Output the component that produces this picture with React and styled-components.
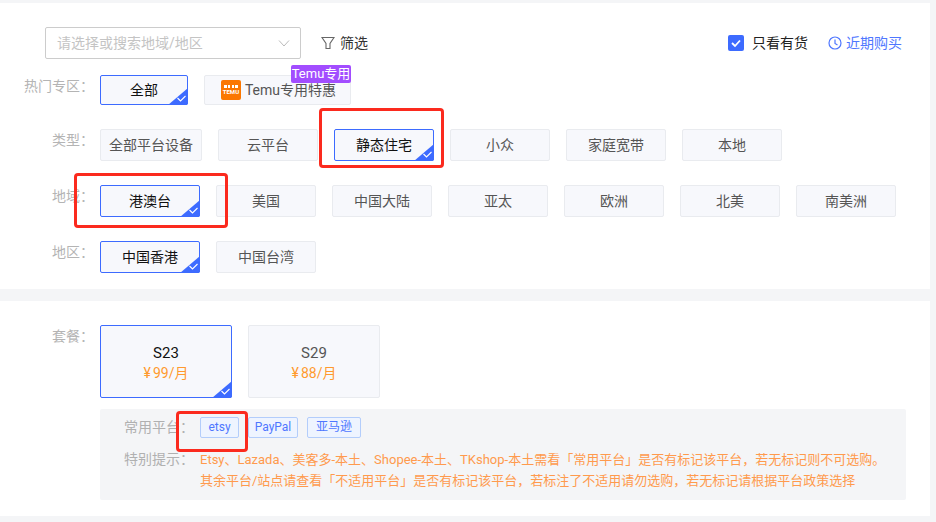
import React from "react"
import styled, { createGlobalStyle } from "styled-components"

const GlobalStyle = createGlobalStyle`
  html, body {
    margin: 0;
    height: 522px;
    overflow: hidden;
    background: #f4f5f7;
  }
  * {
    box-sizing: border-box;
  }
`

const Page = styled.div`
  position: relative;
  width: 930px;
  padding-top: 3px;
  font-family: Roboto, "Noto Sans CJK SC", sans-serif;
  font-size: 14px;
  color: #555;
`

const Card = styled.section`
  background: #fff;
  padding: ${({ $pad }) => $pad};
  margin-bottom: 12px;
`

const Toolbar = styled.div`
  display: flex;
  align-items: center;
  height: 32px;
  padding: 0 28px 0 45px;
  margin-bottom: 16px;
`

const ToolText = styled.span`
  margin-bottom: 2px;
`

const Select = styled.div`
  width: 256px;
  height: 32px;
  border: 1px solid #ccc;
  border-radius: 2px;
  display: flex;
  align-items: center;
  justify-content: space-between;
  padding: 0 10px 0 11px;
  color: #c4c4c4;
`

const FilterBtn = styled.div`
  display: flex;
  align-items: center;
  gap: 5px;
  margin-left: 20px;
  color: #333;
`

const Right = styled.div`
  margin-left: auto;
  display: flex;
  align-items: center;
`

const Check = styled.span`
  width: 16px;
  height: 16px;
  border-radius: 2px;
  background: #3d6bff;
  display: flex;
  align-items: center;
  justify-content: center;
  margin-right: 8px;
`

const InStock = styled(ToolText)`
  color: #222;
  margin-right: 20px;
`

const Recent = styled.span`
  display: flex;
  align-items: center;
  gap: 4px;
  color: #4f77ff;
`

const Row = styled.div`
  display: flex;
  margin-bottom: ${({ $mb }) => $mb ?? 24}px;
`

const Label = styled.div`
  width: 100px;
  flex: none;
  padding-right: 6px;
  text-align: right;
  line-height: 22px;
  color: #b4b4b4;
`

const Options = styled.div`
  display: flex;
  gap: 16px;
`

const Option = styled.div`
  position: relative;
  width: ${({ $w }) => $w ?? 100}px;
  height: ${({ $h }) => $h ?? 32}px;
  padding-bottom: 2px;
  display: flex;
  align-items: center;
  justify-content: center;
  gap: 4px;
  background: #f7f8fc;
  border: 1px solid ${({ $on }) => ($on ? "#3d6bff" : "#e9ebef")};
  border-radius: 2px;
  color: ${({ $on }) => ($on ? "#111" : "#555")};
`

const Corner = styled.svg`
  position: absolute;
  right: -1px;
  bottom: -1px;
`

const Badge = styled.span`
  position: absolute;
  top: -11px;
  right: -1px;
  width: 60px;
  height: 18px;
  background: #a24dff;
  border-radius: 2px;
  color: #fff;
  font-size: 13px;
  line-height: 18px;
  text-align: center;
`

const TemuLogo = styled.span`
  width: 20px;
  height: 20px;
  margin: 0 0 -2px 2px;
  border-radius: 2px;
  background: #fb7701;
  color: #fff;
  font-size: 6px;
  font-weight: 700;
  line-height: 6px;
  display: flex;
  flex-direction: column;
  align-items: center;
  justify-content: center;
  gap: 1px;
`

const Plan = styled(Option)`
  flex-direction: column;
  gap: 0;
  padding: 3px 0 0;
  line-height: 20px;
`

const PlanName = styled.div`
  font-size: 15px;
`

const Price = styled.div`
  color: #ff9a2e;
  word-spacing: -1.5px;
`

const InfoBox = styled.div`
  width: 806px;
  height: 91px;
  margin-left: 100px;
  background: #f4f5f7;
  border-radius: 2px;
  padding: 8px 0 0 24px;
`

const InfoRow = styled.div`
  display: flex;
  margin-bottom: ${({ $mb }) => $mb ?? 0}px;
`

const InfoLabel = styled.div`
  width: 76px;
  flex: none;
  line-height: 21px;
  color: #b0b0b0;
`

const Tags = styled.div`
  display: flex;
  gap: 9px;
`

const Tag = styled.span`
  width: ${({ $w }) => $w}px;
  height: 21px;
  border: 1px solid #b3cdfb;
  border-radius: 2px;
  background: #eef4ff;
  color: #4f77ff;
  font-size: 12px;
  line-height: 19px;
  text-align: center;
`

const Tips = styled.div`
  color: #ff9a4d;
  font-size: 13px;
  line-height: 21px;
  white-space: nowrap;
`

const Mark = styled.div`
  position: absolute;
  left: ${({ $x }) => $x}px;
  top: ${({ $y }) => $y}px;
  width: ${({ $w }) => $w}px;
  height: ${({ $h }) => $h}px;
  border: 3px solid #fb2a1e;
  border-radius: 4px;
  pointer-events: none;
`

const Tick = () => (
  <Corner width="20" height="17" viewBox="0 0 20 17">
    <path d="M20 0V15a2 2 0 0 1-2 2H0Z" fill="#3d6bff" />
    <path d="M9.5 10l3 3 5-5" fill="none" stroke="#fff" strokeWidth="1.1" />
  </Corner>
)

const OptionRow = ({ label, items, active, mb }) => (
  <Row $mb={mb}>
    <Label>{label}</Label>
    <Options>
      {items.map((item) => (
        <Option key={item} $on={item === active} $w={item === "全部平台设备" ? 102 : 100}>
          {item}
          {item === active && <Tick />}
        </Option>
      ))}
    </Options>
  </Row>
)

export default function App() {
  return (
    <Page>
      <GlobalStyle />
      <Card $pad="24px 0 16px">
        <Toolbar>
          <Select>
            <ToolText>请选择或搜索地域/地区</ToolText>
            <svg width="12" height="12" viewBox="0 0 12 12" fill="none" stroke="#bbb">
              <path d="M1 3.5l5 5.5 5-5.5" />
            </svg>
          </Select>
          <FilterBtn>
            <svg width="14" height="14" viewBox="0 0 14 14" fill="none" stroke="#666" strokeWidth="1.1">
              <path d="M1 1.5h12L9 7.5v5H5V7.5z" />
            </svg>
            <ToolText>筛选</ToolText>
          </FilterBtn>
          <Right>
            <Check>
              <svg width="12" height="12" viewBox="0 0 12 12" fill="none" stroke="#fff" strokeWidth="1.8">
                <path d="M2 6l3 3 5-5.5" />
              </svg>
            </Check>
            <InStock>只看有货</InStock>
            <Recent>
              <svg width="14" height="14" viewBox="0 0 14 14" fill="none" stroke="#4f77ff" strokeWidth="1.2">
                <circle cx="7" cy="7" r="6" />
                <path d="M7 3.5V7.5L9.5 9" />
              </svg>
              <ToolText>近期购买</ToolText>
            </Recent>
          </Right>
        </Toolbar>

        <Row>
          <Label>热门专区：</Label>
          <Options>
            <Option $on $w={88} $h={30}>
              全部
              <Tick />
            </Option>
            <Option $w={147} $h={30}>
              <TemuLogo>
                <svg width="14" height="3" viewBox="0 0 14 3" fill="#fff">
                  <path d="M0 0h3v3H0zM4 0h2v3H4zM8 0h2v3H8zM11 0h3v3h-3z" />
                </svg>
                TEMU
              </TemuLogo>
              Temu专用特惠
              <Badge>Temu专用</Badge>
            </Option>
          </Options>
        </Row>
        <OptionRow
          label="类型："
          items={["全部平台设备", "云平台", "静态住宅", "小众", "家庭宽带", "本地"]}
          active="静态住宅"
        />
        <OptionRow
          label="地域："
          items={["港澳台", "美国", "中国大陆", "亚太", "欧洲", "北美", "南美洲"]}
          active="港澳台"
        />
        <OptionRow label="地区：" items={["中国香港", "中国台湾"]} active="中国香港" mb={0} />
      </Card>

      <Card $pad="24px 0 16px">
        <Row $mb={11}>
          <Label>套餐：</Label>
          <Options>
            <Plan $on $w={132} $h={73}>
              <PlanName>S23</PlanName>
              <Price>¥ 99/月</Price>
              <Tick />
            </Plan>
            <Plan $w={132} $h={73}>
              <PlanName>S29</PlanName>
              <Price>¥ 88/月</Price>
            </Plan>
          </Options>
        </Row>
        <InfoBox>
          <InfoRow $mb={11}>
            <InfoLabel>常用平台：</InfoLabel>
            <Tags>
              <Tag $w={39}>etsy</Tag>
              <Tag $w={50}>PayPal</Tag>
              <Tag $w={54}>亚马逊</Tag>
            </Tags>
          </InfoRow>
          <InfoRow>
            <InfoLabel>特别提示：</InfoLabel>
            <Tips>
              Etsy、Lazada、美客多-本土、Shopee-本土、TKshop-本土需看「常用平台」是否有标记该平台，若无标记则不可选购。
              <br />
              其余平台/站点请查看「不适用平台」是否有标记该平台，若标注了不适用请勿选购，若无标记请根据平台政策选择
            </Tips>
          </InfoRow>
        </InfoBox>
      </Card>

      <Mark $x={319} $y={108} $w={125} $h={60} />
      <Mark $x={74} $y={173} $w={154} $h={55} />
      <Mark $x={176} $y={411} $w={72} $h={41} />
    </Page>
  )
}
